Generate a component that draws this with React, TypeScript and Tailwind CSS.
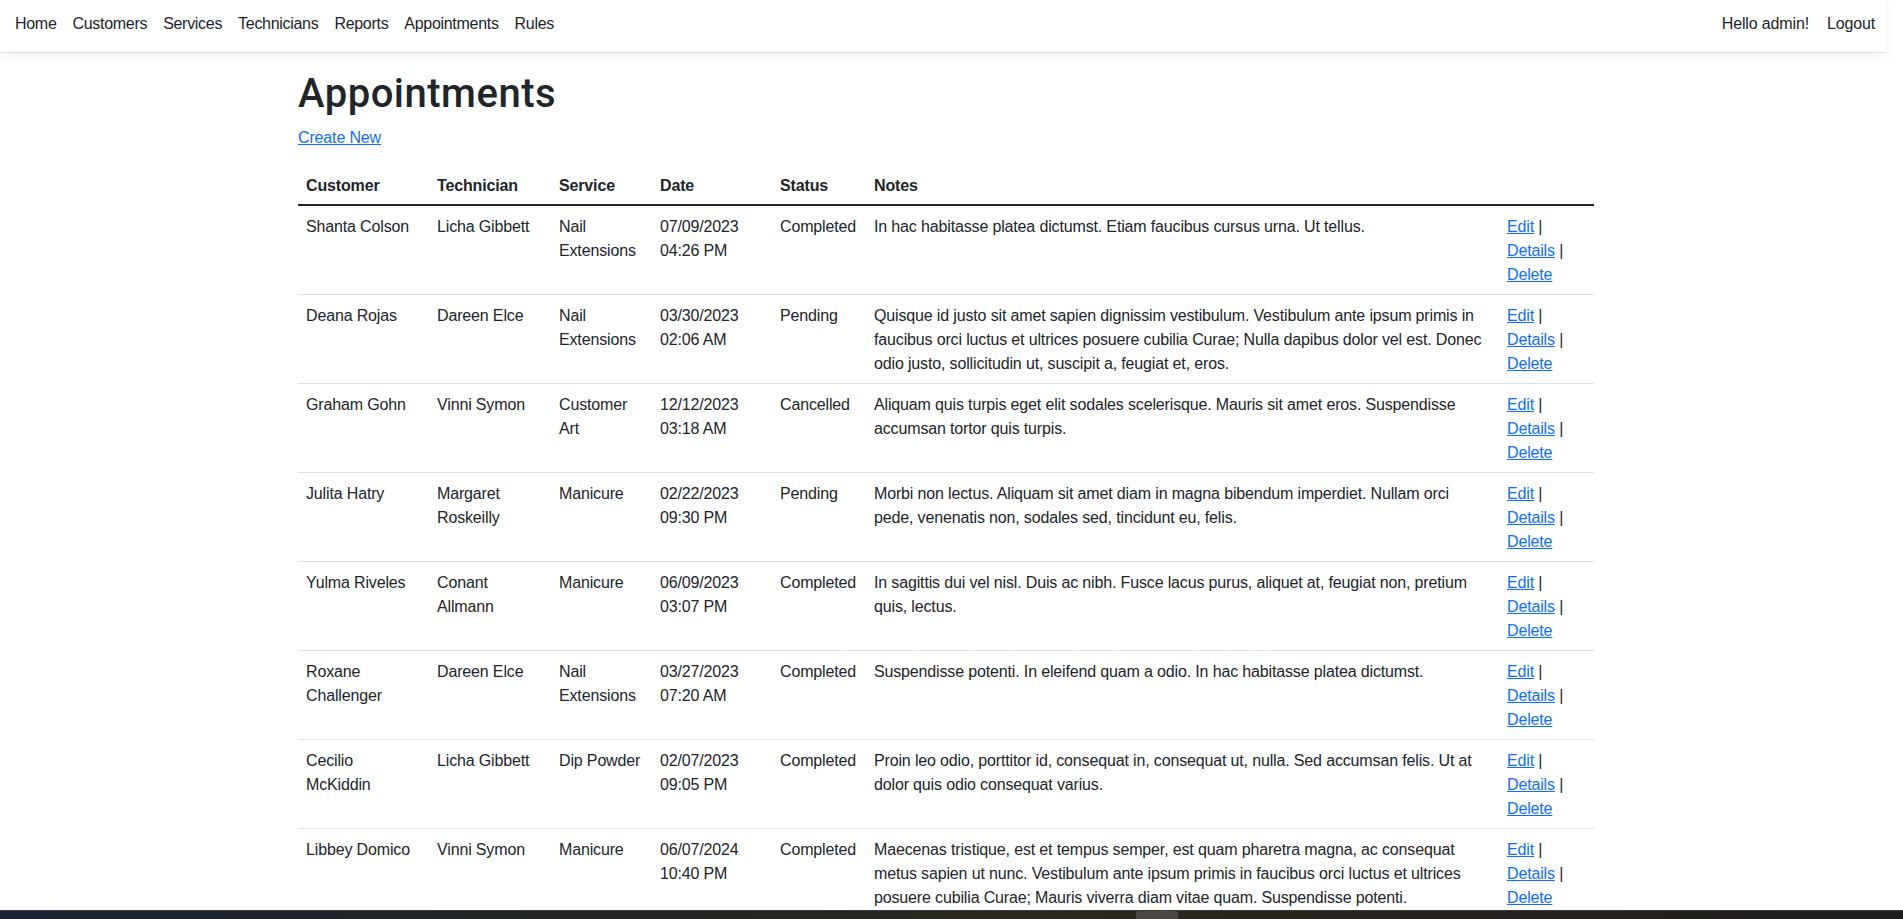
import React from "react";

type Row = {
  customer: string[];
  technician: string[];
  service: string[];
  date: string[];
  status: string;
  notes: string[];
};

const rows: Row[] = [
  {
    customer: ["Shanta Colson"],
    technician: ["Licha Gibbett"],
    service: ["Nail", "Extensions"],
    date: ["07/09/2023", "04:26 PM"],
    status: "Completed",
    notes: ["In hac habitasse platea dictumst. Etiam faucibus cursus urna. Ut tellus."],
  },
  {
    customer: ["Deana Rojas"],
    technician: ["Dareen Elce"],
    service: ["Nail", "Extensions"],
    date: ["03/30/2023", "02:06 AM"],
    status: "Pending",
    notes: [
      "Quisque id justo sit amet sapien dignissim vestibulum. Vestibulum ante ipsum primis in",
      "faucibus orci luctus et ultrices posuere cubilia Curae; Nulla dapibus dolor vel est. Donec",
      "odio justo, sollicitudin ut, suscipit a, feugiat et, eros.",
    ],
  },
  {
    customer: ["Graham Gohn"],
    technician: ["Vinni Symon"],
    service: ["Customer", "Art"],
    date: ["12/12/2023", "03:18 AM"],
    status: "Cancelled",
    notes: [
      "Aliquam quis turpis eget elit sodales scelerisque. Mauris sit amet eros. Suspendisse",
      "accumsan tortor quis turpis.",
    ],
  },
  {
    customer: ["Julita Hatry"],
    technician: ["Margaret", "Roskeilly"],
    service: ["Manicure"],
    date: ["02/22/2023", "09:30 PM"],
    status: "Pending",
    notes: [
      "Morbi non lectus. Aliquam sit amet diam in magna bibendum imperdiet. Nullam orci",
      "pede, venenatis non, sodales sed, tincidunt eu, felis.",
    ],
  },
  {
    customer: ["Yulma Riveles"],
    technician: ["Conant", "Allmann"],
    service: ["Manicure"],
    date: ["06/09/2023", "03:07 PM"],
    status: "Completed",
    notes: [
      "In sagittis dui vel nisl. Duis ac nibh. Fusce lacus purus, aliquet at, feugiat non, pretium",
      "quis, lectus.",
    ],
  },
  {
    customer: ["Roxane", "Challenger"],
    technician: ["Dareen Elce"],
    service: ["Nail", "Extensions"],
    date: ["03/27/2023", "07:20 AM"],
    status: "Completed",
    notes: ["Suspendisse potenti. In eleifend quam a odio. In hac habitasse platea dictumst."],
  },
  {
    customer: ["Cecilio", "McKiddin"],
    technician: ["Licha Gibbett"],
    service: ["Dip Powder"],
    date: ["02/07/2023", "09:05 PM"],
    status: "Completed",
    notes: [
      "Proin leo odio, porttitor id, consequat in, consequat ut, nulla. Sed accumsan felis. Ut at",
      "dolor quis odio consequat varius.",
    ],
  },
  {
    customer: ["Libbey Domico"],
    technician: ["Vinni Symon"],
    service: ["Manicure"],
    date: ["06/07/2024", "10:40 PM"],
    status: "Completed",
    notes: [
      "Maecenas tristique, est et tempus semper, est quam pharetra magna, ac consequat",
      "metus sapien ut nunc. Vestibulum ante ipsum primis in faucibus orci luctus et ultrices",
      "posuere cubilia Curae; Mauris viverra diam vitae quam. Suspendisse potenti.",
    ],
  },
];

function Lines({ lines }: { lines: string[] }) {
  return (
    <>
      {lines.map((l, i) => (
        <div key={i} className="whitespace-nowrap">
          {l}
        </div>
      ))}
    </>
  );
}

const navLinks = ["Home", "Customers", "Services", "Technicians", "Reports", "Appointments", "Rules"];

export default function App() {
  return (
    <div
      className="relative h-screen w-full overflow-hidden bg-white text-[16px] leading-6 tracking-[-0.15px] text-[#212529]"
      style={{ fontFamily: '"Segoe UI", "Liberation Sans", Arial, sans-serif' }}
    >
      <div className="w-[1886px]">
        <header className="flex h-[53px] items-start justify-between border-b border-[#dee2e6] bg-white pt-3 shadow-[0_4px_12px_rgba(0,0,0,0.05)]">
          <nav className="flex gap-[16px] pl-[15px] tracking-[-0.3px]">
            {navLinks.map((l) => (
              <a key={l} className="text-[#212529] no-underline">
                {l}
              </a>
            ))}
          </nav>
          <div className="flex gap-[18px] pr-[11px]">
            <a className="text-[#212529]">Hello admin!</a>
            <a className="text-[#212529]">Logout</a>
          </div>
        </header>

        <main className="mt-[17px] pl-[298px]">
          <h1
            className="mb-2 text-[40px] font-medium leading-[48px] tracking-[0.5px] text-[#212529]"
            style={{ fontFamily: 'Roboto, "Liberation Sans", sans-serif' }}
          >
            Appointments
          </h1>
          <p className="mb-[14px]">
            <a className="cursor-pointer text-[#0d6efd] underline">Create New</a>
          </p>
          <table className="w-[1296px] table-fixed border-collapse text-left">
            <colgroup>
              <col className="w-[131px]" />
              <col className="w-[122px]" />
              <col className="w-[101px]" />
              <col className="w-[120px]" />
              <col className="w-[94px]" />
              <col className="w-[633px]" />
              <col className="w-[95px]" />
            </colgroup>
            <thead>
              <tr className="border-b-2 border-[#212529]">
                <th className="px-2 pb-[6px] pt-[10px] align-bottom font-bold">Customer</th>
                <th className="px-2 pb-[6px] pt-[10px] align-bottom font-bold">Technician</th>
                <th className="px-2 pb-[6px] pt-[10px] align-bottom font-bold">Service</th>
                <th className="px-2 pb-[6px] pt-[10px] align-bottom font-bold">Date</th>
                <th className="px-2 pb-[6px] pt-[10px] align-bottom font-bold">Status</th>
                <th className="px-2 pb-[6px] pt-[10px] align-bottom font-bold">Notes</th>
                <th className="px-2 pb-[6px] pt-[10px] align-bottom font-bold"></th>
              </tr>
            </thead>
            <tbody>
              {rows.map((r, i) => (
                <tr key={i} className="border-b border-[#dee2e6]">
                  <td className="px-2 pb-[7px] pt-[9px] align-top">
                    <Lines lines={r.customer} />
                  </td>
                  <td className="px-2 pb-[7px] pt-[9px] align-top">
                    <Lines lines={r.technician} />
                  </td>
                  <td className="px-2 pb-[7px] pt-[9px] align-top">
                    <Lines lines={r.service} />
                  </td>
                  <td className="px-2 pb-[7px] pt-[9px] align-top">
                    <Lines lines={r.date} />
                  </td>
                  <td className="whitespace-nowrap px-2 pb-[7px] pt-[9px] align-top">{r.status}</td>
                  <td className="px-2 pb-[7px] pt-[9px] align-top">
                    <Lines lines={r.notes} />
                  </td>
                  <td className="px-2 pb-[7px] pt-[9px] align-top">
                    <div className="whitespace-nowrap">
                      <a className="cursor-pointer text-[#0d6efd] underline">Edit</a> |
                    </div>
                    <div className="whitespace-nowrap">
                      <a className="cursor-pointer text-[#0d6efd] underline">Details</a> |
                    </div>
                    <div className="whitespace-nowrap">
                      <a className="cursor-pointer text-[#0d6efd] underline">Delete</a>
                    </div>
                  </td>
                </tr>
              ))}
            </tbody>
          </table>
        </main>
      </div>

      <div className="absolute bottom-0 left-0 right-0 h-[9px] border-t border-[#3a3a3a] bg-[linear-gradient(to_right,#1b2232,#222523_30%,#2b2820_55%,#24211e_80%,#1f1d1c)]">
        <div className="absolute left-[1136px] top-0 h-[8px] w-[42px] rounded-t-[2px] bg-[#4a4641]" />
      </div>
    </div>
  );
}
